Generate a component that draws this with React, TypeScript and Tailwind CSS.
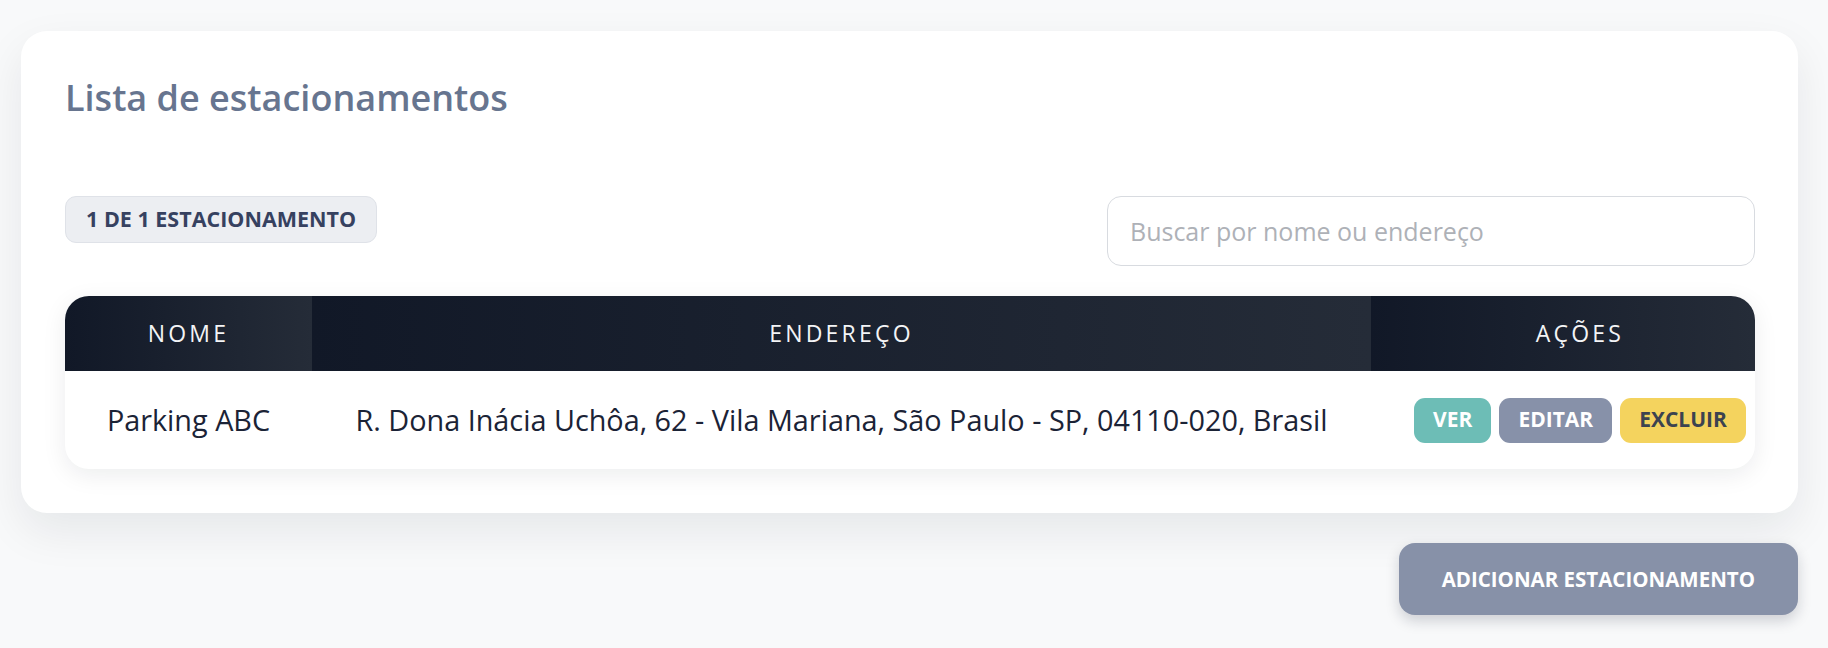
import { useState } from "react";

type Parking = {
  id: number;
  name: string;
  address: string;
};

const parkings: Parking[] = [
  {
    id: 1,
    name: "Parking ABC",
    address:
      "R. Dona Inácia Uchôa, 62 - Vila Mariana, São Paulo - SP, 04110-020, Brasil",
  },
];

const headCell =
  "flex items-center justify-center bg-gradient-to-r from-[#111827] to-[#252c38] text-[23px] font-medium uppercase tracking-[0.14em] text-[#f3f4f6]";

const actionBtn =
  "h-[45px] rounded-[11px] px-[19px] text-[21px] font-bold uppercase";

const ParkingList = () => {
  const [search, setSearch] = useState("");

  const filtered = parkings.filter((p) =>
    (p.name + " " + p.address).toLowerCase().includes(search.toLowerCase())
  );

  return (
    <div className="min-h-screen bg-[#f8f9fa] pl-[21px] pr-[30px] pt-[31px] font-['Open_Sans',sans-serif]">
      <div className="rounded-[26px] bg-white pl-[44px] pr-[43px] pt-[44px] pb-[44px] shadow-[0_18px_45px_rgba(15,23,42,0.08)]">
        <h2 className="text-[36px] font-semibold leading-[1.25] text-[#67758f]">
          Lista de estacionamentos
        </h2>

        <div className="mt-[76px] flex items-start justify-between">
          <span className="flex h-[47px] items-center rounded-[11px] border border-[#dfe2e8] bg-[#eceef2] px-[20px] text-[21.5px] font-bold uppercase text-[#364160]">
            {filtered.length} de {parkings.length} estacionamento
          </span>
          <input
            value={search}
            onChange={(e) => setSearch(e.target.value)}
            placeholder="Buscar por nome ou endereço"
            className="h-[70px] w-[648px] rounded-[14px] border border-[#d8dbe0] bg-white px-[22px] text-[25px] text-[#1e293b] outline-none placeholder:text-[#aeb1b7]"
          />
        </div>

        <div className="mt-[30px] overflow-hidden rounded-[24px] bg-white shadow-[0_6px_24px_rgba(15,23,42,0.08)]">
          <div className="grid h-[75px] grid-cols-[247px_1059px_1fr]">
            <div className={headCell}>Nome</div>
            <div className={headCell}>Endereço</div>
            <div className={headCell + " pl-[34px]"}>Ações</div>
          </div>
          {filtered.map((p) => (
            <div
              key={p.id}
              className="grid h-[98px] grid-cols-[247px_1059px_1fr] items-center text-[28.8px] text-[#1b2336]"
            >
              <div className="text-center">{p.name}</div>
              <div className="text-center">{p.address}</div>
              <div className="flex justify-center gap-[8px] pl-[34px]">
                <button className={actionBtn + " bg-[#6dbdb6] text-white"}>
                  Ver
                </button>
                <button className={actionBtn + " bg-[#8791a9] text-white"}>
                  Editar
                </button>
                <button className={actionBtn + " bg-[#f4d35e] text-[#3c4350]"}>
                  Excluir
                </button>
              </div>
            </div>
          ))}
        </div>
      </div>

      <div className="mt-[30px] flex justify-end">
        <button className="h-[72px] rounded-[16px] bg-[#8791a8] px-[43px] text-[20.5px] font-bold uppercase text-white shadow-[0_6px_14px_rgba(15,23,42,0.18)]">
          Adicionar estacionamento
        </button>
      </div>
    </div>
  );
};

export default function App() {
  return <ParkingList />;
}
